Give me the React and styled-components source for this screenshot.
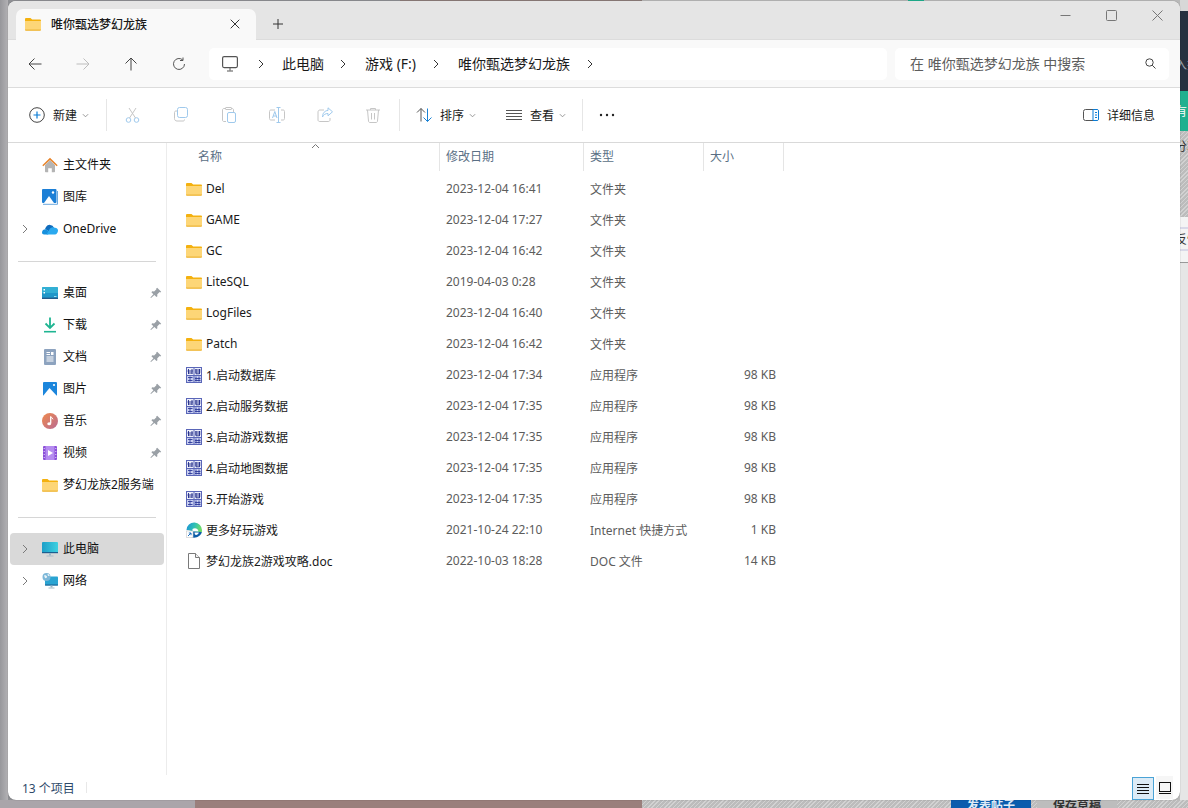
import React from 'react';
import styled, { createGlobalStyle } from 'styled-components';

const FONT = `"Noto Sans", "Noto Sans CJK SC", sans-serif`;
const HATCH = 'repeating-linear-gradient(135deg, #d2d2d2 0 1px, #bcbcbc 1px 3px)';

const Global = createGlobalStyle`
  html, body { margin: 0; padding: 0; background: #c8c8c8; }
  * { box-sizing: border-box; }
  #root { width: 1188px; height: 808px; }
`;

const Desktop = styled.div`
  position: relative; width: 1188px; height: 808px; overflow: hidden;
  font-family: ${FONT}; font-size: 12px; color: #1a1a1a;
  display: grid; grid-template-rows: 1fr 8px;
  background: #d8d8d8;
`;
const BackdropTop = styled.div`
  display: flex; justify-content: space-between; min-height: 0;
  background: linear-gradient(90deg, #8f9094 0 400px, #8d7d7a 400px 642px, #b9b9b9 642px 908px, #1fb08f 908px 924px, #b9b9b9 924px);
`;
const LeftEdge = styled.div`
  width: 8px; background: linear-gradient(90deg, #97979b, #b2b1b4);
`;
const RightEdge = styled.div`
  width: 8px; display: flex; flex-direction: column; background: #e6e6e6;
`;
const EdgeBand = styled.div`
  height: ${p => p.$h}px; flex: none; background: ${p => p.$c}; overflow: hidden;
  color: ${p => p.$t || '#333'}; font-size: 12px; line-height: 16px; white-space: nowrap;
  padding-top: ${p => p.$pt || 0}px; text-indent: -5px;
`;
const BackdropBottom = styled.div`
  display: flex; overflow: hidden; background: #bdbdbd;
`;
const BottomBand = styled.div`
  width: ${p => p.$w}px; flex: none; background: ${p => p.$c};
  color: ${p => p.$t || 'transparent'}; font-size: 12px; font-weight: 600; line-height: 12px;
  margin-top: 0; text-align: center; white-space: nowrap; overflow: hidden;
`;

const Win = styled.div`
  position: absolute; left: 8px; top: 1px; width: 1172px; height: 799px;
  background: #fff; border-radius: 8px; overflow: hidden;
  display: flex; flex-direction: column;
  box-shadow: 0 0 1px rgba(0,0,0,.5);
`;

const TabBar = styled.div`
  height: 39px; flex: none; background: #e5e5e5; display: flex; align-items: flex-end;
  padding-left: 8px; border-bottom: 1px solid #dcdcdc;
`;
const Tab = styled.div`
  width: 240px; height: 31px; background: #f9f9f9; border-radius: 7px 7px 0 0;
  display: flex; align-items: center; padding: 0 16px 2px 9px; margin-bottom: -1px;
  font-size: 12px; color: #1a1a1a;
`;
const TabTitle = styled.span`
  flex: 1; margin-left: 10px; font-weight: 500;
`;
const NewTab = styled.div`
  width: 44px; height: 31px; display: flex; align-items: center; justify-content: center; color: #333;
`;
const Spacer = styled.div` flex: 1; `;
const WinBtns = styled.div`
  align-self: stretch; display: flex; align-items: flex-start; padding: 6px 0 0;
`;
const WinBtn = styled.div`
  width: 46px; height: 16px; display: flex; align-items: center; justify-content: center;
`;

const AddressRow = styled.div`
  height: 48px; flex: none; background: #f9f9f9; display: flex; align-items: center;
  padding: 0 11px 0 0; border-bottom: 1px solid #dcdcdc;
`;
const Nav = styled.div`
  width: 201px; flex: none; display: flex; align-items: center; padding-left: 3px;
`;
const NavBtn = styled.div`
  width: 48px; height: 32px; display: flex; align-items: center; justify-content: center;
`;
const AddressBar = styled.div`
  width: 678px; height: 32px; flex: none; background: #fff; border-radius: 5px;
  display: flex; align-items: center; padding-left: 13px; font-size: 14px; color: #1a1a1a;
`;
const Crumb = styled.span`
  margin: -2px ${p => p.$gap}px 0 0;
`;
const CrumbChevron = styled.span`
  display: inline-flex; margin: 0 ${p => p.$gap || 0}px 0 ${p => p.$ml || 0}px;
`;
const SearchBox = styled.div`
  width: 274px; height: 32px; flex: none; margin-left: 8px; background: #fff; border-radius: 5px;
  display: flex; align-items: center; justify-content: space-between;
  padding: 0 13px 0 15px; font-size: 14px; color: #5d5d5d;
`;
const SearchText = styled.span` margin-top: -2px; `;

const Toolbar = styled.div`
  height: 55px; flex: none; background: #fff; display: flex; align-items: center;
  border-bottom: 1px solid #d9d9d9; padding: 0 25px 0 21px;
`;
const ToolBtn = styled.div`
  display: flex; align-items: center; justify-content: center; flex: none;
  width: ${p => p.$w ? p.$w + 'px' : 'auto'}; margin-left: ${p => p.$ml || 0}px; color: #1a1a1a;
`;
const ToolLabel = styled.span`
  margin-left: ${p => p.$ml || 8}px; margin-right: ${p => p.$mr ?? 5}px;
`;
const ToolSep = styled.div`
  width: 1px; height: 32px; background: #e6e6e6; flex: none; margin-left: ${p => p.$ml || 0}px;
`;

const Body = styled.div`
  flex: 1; min-height: 0; display: flex;
`;
const Sidebar = styled.div`
  width: 159px; flex: none; border-right: 1px solid #ececec; padding: 6px 2px 0;
`;
const NavRow = styled.div`
  height: 32px; display: flex; align-items: center; position: relative; border-radius: 4px;
  background: ${p => p.$active ? '#d9d9d9' : 'transparent'};
  font-size: 12px; color: #111;
`;
const Chevron = styled.div`
  width: 32px; flex: none; padding-left: 10px; display: flex; align-items: center;
`;
const NavIcon = styled.div`
  width: 16px; height: 16px; flex: none; display: flex;
`;
const NavLabel = styled.span`
  margin-left: 5px; white-space: nowrap; padding-bottom: 2px;
`;
const Pin = styled.div`
  position: absolute; left: 140px; top: 10px; display: flex;
`;
const NavDivider = styled.div`
  height: 1px; background: #d6d6d6; margin: 16px 8px 15px;
`;

const Content = styled.div`
  flex: 1; min-width: 0; position: relative;
`;
const HeaderRow = styled.div`
  display: grid; grid-template-columns: 273px 144px 120px 80px; height: 28px; color: #5a6f85;
`;
const HeaderCell = styled.div`
  padding-left: ${p => p.$pl || 6}px; border-right: 1px solid #e5e5e5; display: flex; align-items: center;
  padding-bottom: 2px; height: 28px;
`;
const SortArrow = styled.div`
  position: absolute; left: 144px; top: 0; display: flex;
`;
const Rows = styled.div`
  padding-top: 2px;
`;
const FileRow = styled.div`
  display: grid; grid-template-columns: 273px 144px 120px 72px; height: 31px; align-items: center;
  color: #1a1a1a;
`;
const NameCell = styled.div`
  display: flex; align-items: center; padding-left: 19px; white-space: nowrap;
`;
const FileName = styled.span` margin-left: 4px; `;
const MetaCell = styled.div`
  padding-left: 6px; color: #5c5c5c; white-space: nowrap;
`;
const SizeCell = styled.div`
  text-align: right; color: #5c5c5c; white-space: nowrap;
`;

const Status = styled.div`
  height: 25px; flex: none; display: flex; align-items: center; padding: 0 7px 0 14px;
  color: #2e4a6a; font-size: 12px; position: relative;
`;
const StatusSep = styled.div`
  width: 1px; height: 11px; background: #e8e8e8; margin-left: 11px;
`;
const ViewBtn = styled.div`
  width: ${p => p.$on ? 22 : 17}px; height: 23px; display: flex; align-items: center; justify-content: center;
  background: ${p => p.$on ? '#dcebf6' : '#f6f6f6'};
  border: ${p => p.$on ? '1px solid #4aa3d6' : 'none'};
  margin-left: ${p => p.$on ? 0 : 2}px; flex: none; align-self: ${p => p.$on ? 'flex-end' : 'center'};
`;

const S = ({ w = 16, h = 16, vb = '0 0 16 16', children }) => (
  <svg width={w} height={h} viewBox={vb} fill="none" style={{ flex: 'none', display: 'block' }}>{children}</svg>
);

const Folder = () => (
  <S>
    <path d="M0 3.200C0 2.500.5 2 1.200 2h4.300l1.700 1.600h7.600c.7 0 1.200.5 1.200 1.200V6H0z" fill="#f4b10f" />
    <path d="M0 5h16v8.600c0 .6-.5 1-1 1H1c-.6 0-1-.4-1-1z" fill="#fdd677" />
    <path d="M0 13.400h16v.4c0 .5-.5.9-1 .9H1c-.6 0-1-.4-1-.9z" fill="#eeb63a" />
  </S>
);
const ChevR = ({ c = '#333', s = 10 }) => (
  <S w={s} h={s} vb="0 0 10 10"><path d="M3 1l4 4-4 4" stroke={c} strokeWidth="1" /></S>
);
const ChevD = () => (
  <S w={7} h={7} vb="0 0 8 8"><path d="M1 2.500l3 3 3-3" stroke="#8a8a8a" strokeWidth="1" /></S>
);
const PinI = () => (
  <S w={12} h={12} vb="0 0 12 12">
    <path d="M7.200.8l4 4-1 .6-.7-.3-2.300 2.300.2 1.800-.9.9-2.100-2.100L1 11l-.6-.4 3-3.400-2-2 .9-.9 1.800.2L6.400 2.200l-.2-.7z" fill="#9aa0a6" />
  </S>
);
const ExeIcon = () => (
  <S>
    <rect x="0" y="0" width="16" height="16" fill="#5a66b8" />
    <rect x="1" y="1" width="6.500" height="7" fill="#eef0fb" />
    <rect x="8.500" y="1" width="6.500" height="7" fill="#eef0fb" />
    <rect x="1" y="9" width="6.500" height="6" fill="#c9cff0" />
    <rect x="8.500" y="9" width="6.500" height="6" fill="#c9cff0" />
    <path d="M2.500 2v5M6 2v5M1.500 4h5.500M2 6h4.500M10 2v5M13.500 2v5M9 3h5.500M9 5h5.500M10 6.800h3.500" stroke="#1f2a88" strokeWidth=".9" />
    <path d="M2 10.500h4.500M4 9.500v5M2 13.500h4.500M10 9.500v5M13 9.500v5M9 11.500h5.500M9 13.500h5.500" stroke="#2c3a9a" strokeWidth=".9" />
  </S>
);
const EdgeIcon = () => (
  <S>
    <defs>
      <linearGradient id="eg" x1="0" y1="0" x2="1" y2=".2">
        <stop offset="0" stopColor="#1a8fd8" /><stop offset=".55" stopColor="#2fc0b4" /><stop offset="1" stopColor="#6edb6a" />
      </linearGradient>
    </defs>
    <path d="M.5 8A7.600 7.600 0 0 1 16 8.500c0 .7-.1 1.300-.3 2H6.500C6 9 4 8 .5 8z" fill="url(#eg)" />
    <path d="M6.500 7c2-1.200 5.500-1 6 2.500h-6z" fill="#fff" />
    <path d="M15.800 10c-.8 3.300-4 5.700-7.800 5.700-1 0-2-.2-2.500-.5l1-5.700z" fill="#0d5ea8" />
    <path d="M8.500 10.500h4.300c-.3 1.500-1.500 2.500-2.800 2.500-.9 0-1.500-1.500-1.500-2.500z" fill="#fff" />
    <rect x=".5" y="9" width="6.500" height="6.500" fill="#fff" stroke="#c8c8c8" strokeWidth=".6" />
    <path d="M2 14l3-3M2.800 11h2.200v2.200" stroke="#1a6fc0" strokeWidth="1" />
  </S>
);
const DocIcon = () => (
  <S>
    <path d="M2.500.5h7l4 4v11h-11z" fill="#fff" stroke="#7a7a7a" />
    <path d="M9.500.5v4h4" fill="#f2f2f2" stroke="#7a7a7a" />
  </S>
);
const Home = () => (
  <S>
    <path d="M3 8l5-5 5 5v6.500c0 .4-.3.7-.7.7H9.800v-4H6.200v4H3.700c-.4 0-.7-.3-.7-.7z" fill="#b4b4b4" />
    <path d="M.3 8.200L8 .8l7.700 7.400-1 1L8 2.900 1.300 9.200z" fill="#e8842a" />
  </S>
);
const Gallery = () => (
  <S>
    <rect x="0" y="0" width="14.500" height="14" rx="1" fill="#1c7fd6" />
    <path d="M2 14L7 7l5 7z" fill="#fff" />
    <circle cx="11" cy="3.500" r="1.200" fill="#fff" />
    <path d="M1 15.300h14.500V2" stroke="#6ba8de" strokeWidth="1" />
  </S>
);
const Cloud = () => (
  <S>
    <path d="M4 6a4.500 4.500 0 0 1 8 .7L8 11 3 8z" fill="#0f6cbd" />
    <path d="M0 11.500C0 9 2.200 8 4 8.300L8 11l-2 2.500H2c-1.200 0-2-1-2-2z" fill="#1790dd" />
    <path d="M8 7.500c2-1.700 4-1.500 5-.7 2 0 3 1.500 3 2.700 0 2-1.500 4-3 4H4.500z" fill="#2aa9ef" />
  </S>
);
const DeskI = () => (
  <S>
    <rect x="0" y="2" width="16" height="12" rx="1" fill="#2097c9" />
    <rect x="0" y="2" width="16" height="6" fill="#3fc0dc" opacity=".6" />
    <rect x="0" y="12.600" width="16" height="1.400" fill="#235c8c" />
    <rect x="1.500" y="4" width="1.500" height="1.500" fill="#fff" />
    <rect x="1.500" y="7" width="1.500" height="1.500" fill="#fff" />
    <rect x="12" y="11" width="2.500" height="1" fill="#9fdcf0" />
  </S>
);
const Down = () => (
  <S>
    <path d="M8 .5v10M3.500 6.500L8 11l4.500-4.500" stroke="#1fb592" strokeWidth="1.800" />
    <path d="M2 14.700h12" stroke="#1fb592" strokeWidth="1.600" />
  </S>
);
const DocsI = () => (
  <S>
    <rect x="2" y="0" width="12" height="16" rx="1" fill="#8da3bf" />
    <path d="M4.500 3.500h3.500M4.500 5.500h3.500M4.500 8h7M4.500 10h7M4.500 12h7" stroke="#fff" strokeWidth="1" />
    <rect x="9" y="3" width="2.500" height="3" fill="#fff" />
  </S>
);
const Pics = () => (
  <S>
    <rect x="1" y="1" width="14" height="14" rx="1" fill="#1c86dc" />
    <path d="M1 15l6.500-8 7.500 8z" fill="#fff" />
    <circle cx="12" cy="4" r="1.100" fill="#fff" />
  </S>
);
const Music = () => (
  <S>
    <defs>
      <linearGradient id="mg" x1="0" y1="0" x2="1" y2="1">
        <stop offset="0" stopColor="#f08a4c" /><stop offset="1" stopColor="#b86a94" />
      </linearGradient>
    </defs>
    <circle cx="8" cy="8" r="8" fill="url(#mg)" />
    <path d="M8.700 3.500v7" stroke="#fff" strokeWidth="1.300" />
    <ellipse cx="7.200" cy="10.800" rx="1.900" ry="1.500" fill="#fff" />
    <path d="M8.700 3.500c.6 1.200 2 1.500 2.300 2.800" stroke="#fff" strokeWidth="1" />
  </S>
);
const Video = () => (
  <S>
    <rect x="1" y="1" width="14" height="14" rx="1" fill="#8b4fd8" />
    <rect x="3.500" y="1" width="9" height="14" fill="#b58cf0" />
    <path d="M6 5l5 3-5 3z" fill="#fff" />
    <path d="M2.200 3v1M2.200 6v1M2.200 9v1M2.200 12v1M13.800 3v1M13.800 6v1M13.800 9v1M13.800 12v1" stroke="#e6d8fa" strokeWidth="1" />
  </S>
);
const PcI = () => (
  <S>
    <defs>
      <linearGradient id="pg" x1="0" y1="0" x2="1" y2="0">
        <stop offset="0" stopColor="#1c9fc8" /><stop offset="1" stopColor="#3fd0e0" />
      </linearGradient>
    </defs>
    <rect x="0" y="1" width="16" height="11" rx="1" fill="url(#pg)" />
    <rect x="0" y="11" width="16" height="1.200" fill="#1d5f90" />
    <path d="M8 12v2.500" stroke="#9db7c6" strokeWidth="2" />
    <path d="M4.500 15h7" stroke="#a8bcc8" strokeWidth="1" />
  </S>
);
const NetI = () => (
  <S>
    <rect x="3" y="3.500" width="13" height="9" rx=".8" fill="#2aa4d2" />
    <rect x="3" y="11.500" width="13" height="1" fill="#1d5f90" />
    <path d="M9.500 12.500v2" stroke="#9db7c6" strokeWidth="2" />
    <path d="M6.500 15h6" stroke="#a8bcc8" strokeWidth="1" />
    <circle cx="4.500" cy="4" r="4" fill="#7cb7d8" />
    <path d="M2 2.500c1.500-.8 2.500 0 3 1s-1 2-2 1.500zM5.500 1c1 0 2 .5 2.300 1.800L6 3z" fill="#eaf4f8" />
  </S>
);

const L = '#9fc9ec';
const G = '#c6c6c6';

const rows = [
  ['Del', '2023-12-04 16:41', '文件夹', '', Folder],
  ['GAME', '2023-12-04 17:27', '文件夹', '', Folder],
  ['GC', '2023-12-04 16:42', '文件夹', '', Folder],
  ['LiteSQL', '2019-04-03 0:28', '文件夹', '', Folder],
  ['LogFiles', '2023-12-04 16:40', '文件夹', '', Folder],
  ['Patch', '2023-12-04 16:42', '文件夹', '', Folder],
  ['1.启动数据库', '2023-12-04 17:34', '应用程序', '98 KB', ExeIcon],
  ['2.启动服务数据', '2023-12-04 17:35', '应用程序', '98 KB', ExeIcon],
  ['3.启动游戏数据', '2023-12-04 17:35', '应用程序', '98 KB', ExeIcon],
  ['4.启动地图数据', '2023-12-04 17:35', '应用程序', '98 KB', ExeIcon],
  ['5.开始游戏', '2023-12-04 17:35', '应用程序', '98 KB', ExeIcon],
  ['更多好玩游戏', '2021-10-24 22:10', 'Internet 快捷方式', '1 KB', EdgeIcon],
  ['梦幻龙族2游戏攻略.doc', '2022-10-03 18:28', 'DOC 文件', '14 KB', DocIcon],
];

const NavItem = ({ icon: I, label, chevron, pin, active }) => (
  <NavRow $active={active}>
    <Chevron>{chevron && <ChevR c="#7a7a7a" />}</Chevron>
    <NavIcon><I /></NavIcon>
    <NavLabel>{label}</NavLabel>
    {pin && <Pin><PinI /></Pin>}
  </NavRow>
);

export default function App() {
  return (
    <Desktop>
      <Global />
      <BackdropTop>
        <LeftEdge />
        <RightEdge>
          <EdgeBand $h={11} $c="#d8d8d8" />
          <EdgeBand $h={80} $c="#273140" $t="#9aa3ad" $pt={46}>入搜</EdgeBand>
          <EdgeBand $h={40} $c="#1fb08f" $t="#fff" $pt={13}>有</EdgeBand>
          <EdgeBand $h={86} $c={HATCH} $pt={8}>分享</EdgeBand>
          <EdgeBand $h={45} $c="linear-gradient(#f4f4f4 0 10px, #d9d9e8 10px 12px, #f4f4f4 12px 32px, #d9d9e8 32px 34px, #f4f4f4 34px)" $pt={15}>反馈</EdgeBand>
          <EdgeBand $h={1} $c="#999" />
        </RightEdge>
      </BackdropTop>
      <BackdropBottom>
        <BottomBand $w={195} $c="#aaa5aa" />
        <BottomBand $w={447} $c="#9a7f7c" />
        <BottomBand $w={309} $c={HATCH} />
        <BottomBand $w={80} $c="#0b5cad" $t="#dfeaf6">发表帖子</BottomBand>
        <BottomBand $w={6} $c={HATCH} />
        <BottomBand $w={80} $c="#bdbdbd" $t="#333">保存草稿</BottomBand>
        <BottomBand $w={71} $c={HATCH} />
      </BackdropBottom>

      <Win>
        <TabBar>
          <Tab>
            <Folder />
            <TabTitle>唯你甄选梦幻龙族</TabTitle>
            <S w={10} h={10} vb="0 0 10 10"><path d="M.7.700l8.600 8.600M9.300.700L.7 9.300" stroke="#333" strokeWidth="1" /></S>
          </Tab>
          <NewTab>
            <S w={10} h={10} vb="0 0 10 10"><path d="M5 0v10M0 5h10" stroke="#333" strokeWidth="1" /></S>
          </NewTab>
          <Spacer />
          <WinBtns>
            <WinBtn><S w={11} h={11} vb="0 0 11 11"><path d="M.5 5.500h10" stroke="#777" /></S></WinBtn>
            <WinBtn><S w={11} h={11} vb="0 0 11 11"><rect x=".5" y=".5" width="10" height="10" rx="1" stroke="#777" /></S></WinBtn>
            <WinBtn><S w={11} h={11} vb="0 0 11 11"><path d="M.5.500l10 10M10.500.500l-10 10" stroke="#777" /></S></WinBtn>
          </WinBtns>
        </TabBar>

        <AddressRow>
          <Nav>
            <NavBtn><S w={14} h={14} vb="0 0 14 14"><path d="M1 7h12.500M6.500 1.500L1 7l5.500 5.500" stroke="#444" strokeWidth="1" /></S></NavBtn>
            <NavBtn><S w={14} h={14} vb="0 0 14 14"><path d="M.5 7H13M7.500 1.500L13 7l-5.500 5.500" stroke="#bdbdbd" strokeWidth="1" /></S></NavBtn>
            <NavBtn><S w={14} h={14} vb="0 0 14 14"><path d="M7 13.500V1M1.500 6.500L7 1l5.500 5.500" stroke="#444" strokeWidth="1" /></S></NavBtn>
            <NavBtn><S w={14} h={14} vb="0 0 14 14"><path d="M12.500 7a5.500 5.500 0 1 1-1.800-4.100M11 .5v3H8" stroke="#555" strokeWidth="1" /></S></NavBtn>
          </Nav>
          <AddressBar>
            <S><rect x=".6" y=".6" width="14.800" height="11" rx="1.500" stroke="#555" strokeWidth="1.200" /><path d="M8 11.600v3M5 15h6" stroke="#555" /></S>
            <CrumbChevron $ml={18} $gap={16}><ChevR /></CrumbChevron>
            <Crumb $gap={14}>此电脑</Crumb>
            <CrumbChevron $gap={17}><ChevR /></CrumbChevron>
            <Crumb $gap={15}>游戏 (F:)</Crumb>
            <CrumbChevron $gap={17}><ChevR /></CrumbChevron>
            <Crumb $gap={15}>唯你甄选梦幻龙族</Crumb>
            <CrumbChevron><ChevR /></CrumbChevron>
          </AddressBar>
          <SearchBox>
            <SearchText>在 唯你甄选梦幻龙族 中搜索</SearchText>
            <S w={11} h={11} vb="0 0 11 11"><circle cx="4.500" cy="4.500" r="3.700" stroke="#444" /><path d="M7.200 7.200l3.300 3.300" stroke="#444" /></S>
          </SearchBox>
        </AddressRow>

        <Toolbar>
          <ToolBtn>
            <S><circle cx="8" cy="8" r="7.300" stroke="#444" strokeWidth="1" /><path d="M8 4.500v7M4.500 8h7" stroke="#0a7cd6" strokeWidth="1.200" /></S>
            <ToolLabel>新建</ToolLabel>
            <ChevD />
          </ToolBtn>
          <ToolSep $ml={17} />
          <ToolBtn $w={48} $ml={2}>
            <S><circle cx="3.500" cy="13" r="2.300" stroke={L} /><circle cx="11.500" cy="13" r="2.300" stroke={L} /><path d="M4.500 11L11 1M10.500 11L4 1" stroke={G} strokeWidth="1" /></S>
          </ToolBtn>
          <ToolBtn $w={48}>
            <S><rect x="4.500" y=".5" width="10" height="10" rx="2" stroke={L} /><path d="M4 4H3C2 4 1.500 4.700 1.500 5.500v6c0 1.500 1 2.500 2.500 2.500h6c1 0 1.500-.5 1.500-1.500" stroke={G} /></S>
          </ToolBtn>
          <ToolBtn $w={48}>
            <S><rect x="6.500" y="5.500" width="8" height="10" rx="1.500" stroke={L} /><path d="M5 14.500H3c-1 0-1.500-.5-1.500-1.500V3c0-1 .5-1.500 1.500-1.500h8c1 0 1.500.5 1.500 1.500v2" stroke={G} /><rect x="5" y=".5" width="5" height="2" fill="#fff" stroke={G} /></S>
          </ToolBtn>
          <ToolBtn $w={48}>
            <S><path d="M6 3H2c-1 0-1.500.5-1.500 1.500v7c0 1 .5 1.500 1.500 1.500h4M12 3h2c1 0 1.500.5 1.500 1.500v7c0 1-.5 1.500-1.500 1.500h-2" stroke={G} /><path d="M9.500.5v15M7.500.5h4M7.500 15.500h4" stroke={L} /><path d="M3.500 11l2.300-6.500L8 11M4.300 9h3" stroke={L} /></S>
          </ToolBtn>
          <ToolBtn $w={48}>
            <S><path d="M7 3H3C1.800 3 1 3.800 1 5v8c0 1 .8 1.500 2 1.500h8c1.200 0 2-.5 2-1.500v-2" stroke={G} /><path d="M11 .8l4.500 4-4.500 4V6.500C8.500 6.500 6.500 7.500 5.500 10c0-4 2.500-6.500 5.500-6.500z" stroke={L} /></S>
          </ToolBtn>
          <ToolBtn $w={48}>
            <S><path d="M1 3h14M5.500 3V1.500h5V3M2.500 3l1 11c0 .8.500 1.500 1.500 1.500h6c1 0 1.500-.7 1.500-1.500l1-11M6.500 6v6.500M9.500 6v6.500" stroke={G} /></S>
          </ToolBtn>
          <ToolSep $ml={2} />
          <ToolBtn $ml={16}>
            <S><path d="M5 14.500V1.500M1 5.500l4-4 4 4" stroke="#555" /><path d="M11.500 1.500v13M7.500 10.500l4 4 4-4" stroke="#1a82d4" /></S>
            <ToolLabel>排序</ToolLabel>
            <ChevD />
          </ToolBtn>
          <ToolBtn $ml={30}>
            <S><path d="M0 3.500h16M0 6.500h16M0 9.500h16M0 12.500h16" stroke="#555" /></S>
            <ToolLabel>查看</ToolLabel>
            <ChevD />
          </ToolBtn>
          <ToolSep $ml={16} />
          <ToolBtn $ml={16}>
            <S><circle cx="2" cy="8" r="1.200" fill="#222" /><circle cx="8" cy="8" r="1.200" fill="#222" /><circle cx="14" cy="8" r="1.200" fill="#222" /></S>
          </ToolBtn>
          <Spacer />
          <ToolBtn>
            <S><rect x=".5" y="2.500" width="15" height="11" rx="2" stroke="#555" /><path d="M10 2.500h4c1 0 1.500.6 1.500 1.500v8c0 1-.5 1.500-1.500 1.500h-4z" fill="#fff" stroke="#0a7cd6" /><path d="M12 5.500h2M12 8h2M12 10.500h2" stroke="#0a7cd6" /></S>
            <ToolLabel $mr={0}>详细信息</ToolLabel>
          </ToolBtn>
        </Toolbar>

        <Body>
          <Sidebar>
            <NavItem icon={Home} label="主文件夹" />
            <NavItem icon={Gallery} label="图库" />
            <NavItem icon={Cloud} label="OneDrive" chevron />
            <NavDivider />
            <NavItem icon={DeskI} label="桌面" pin />
            <NavItem icon={Down} label="下载" pin />
            <NavItem icon={DocsI} label="文档" pin />
            <NavItem icon={Pics} label="图片" pin />
            <NavItem icon={Music} label="音乐" pin />
            <NavItem icon={Video} label="视频" pin />
            <NavItem icon={Folder} label="梦幻龙族2服务端" />
            <NavDivider />
            <NavItem icon={PcI} label="此电脑" chevron active />
            <NavItem icon={NetI} label="网络" chevron />
          </Sidebar>
          <Content>
            <SortArrow><S w={9} h={6} vb="0 0 9 6"><path d="M1 5l3.500-3.500L8 5" stroke="#777" /></S></SortArrow>
            <HeaderRow>
              <HeaderCell $pl={31}>名称</HeaderCell>
              <HeaderCell>修改日期</HeaderCell>
              <HeaderCell>类型</HeaderCell>
              <HeaderCell>大小</HeaderCell>
            </HeaderRow>
            <Rows>
              {rows.map(([n, d, t, s, I]) => (
                <FileRow key={n}>
                  <NameCell><I /><FileName>{n}</FileName></NameCell>
                  <MetaCell>{d}</MetaCell>
                  <MetaCell>{t}</MetaCell>
                  <SizeCell>{s}</SizeCell>
                </FileRow>
              ))}
            </Rows>
          </Content>
        </Body>

        <Status>
          <span>13 个项目</span>
          <StatusSep />
          <Spacer />
          <ViewBtn $on>
            <S w={14} h={14} vb="0 0 14 14"><path d="M1 2.500h12M1 5.500h12M1 8.500h12M1 11.500h12" stroke="#111" /></S>
          </ViewBtn>
          <ViewBtn>
            <S w={14} h={14} vb="0 0 14 14"><rect x="1.500" y="1.500" width="11" height="9" stroke="#111" /><path d="M1 12.500h12" stroke="#111" /></S>
          </ViewBtn>
        </Status>
      </Win>
    </Desktop>
  );
}
